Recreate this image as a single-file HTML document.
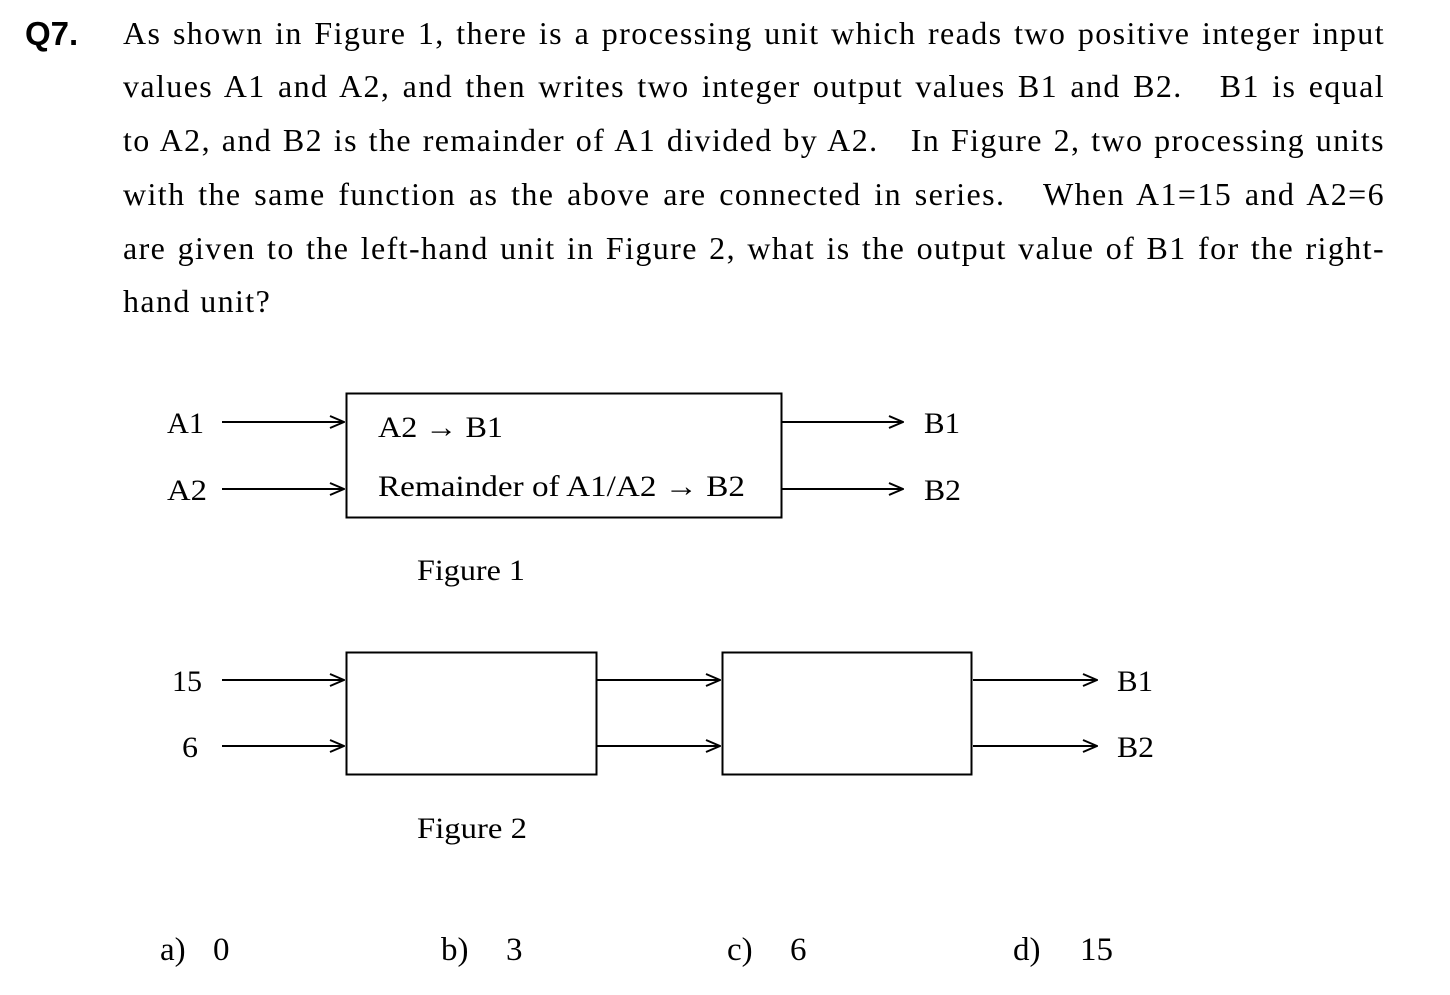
<!DOCTYPE html>
<html><head><meta charset="utf-8"><style>
html,body{margin:0;padding:0;background:#fff;width:1450px;height:995px;overflow:hidden;position:relative}
.q{position:absolute;left:25px;top:15px;font:bold 33px "Liberation Sans",sans-serif;color:#000}
.l{position:absolute;left:123px;width:1262px;font:32px "Liberation Serif",serif;letter-spacing:1.4px;color:#000;text-align:justify;text-align-last:justify;white-space:nowrap;line-height:40px}
.l.last{text-align-last:left}
svg{position:absolute;left:0;top:0}
svg text{font-family:"Liberation Serif",serif;fill:#000}
</style></head><body>
<div class="q">Q7.</div>
<div class="l" style="top:13px">As shown in Figure 1, there is a processing unit which reads two positive integer input</div>
<div class="l" style="top:66px">values A1 and A2, and then writes two integer output values B1 and B2. &nbsp; B1 is equal</div>
<div class="l" style="top:120px">to A2, and B2 is the remainder of A1 divided by A2. &nbsp; In Figure 2, two processing units</div>
<div class="l" style="top:174px">with the same function as the above are connected in series. &nbsp; When A1=15 and A2=6</div>
<div class="l" style="top:228px">are given to the left-hand unit in Figure 2, what is the output value of B1 for the right-</div>
<div class="l last" style="top:281px">hand unit?</div>
<svg width="1450" height="995" viewBox="0 0 1450 995">
<defs><marker id="a" markerWidth="16" markerHeight="14" refX="15" refY="7" orient="auto" markerUnits="userSpaceOnUse"><path d="M1,1 L15,7 L1,13" fill="none" stroke="#000" stroke-width="2"/></marker></defs>
<g stroke="#000" stroke-width="2" fill="none">
<rect x="346.5" y="393.5" width="435" height="124"/>
<line x1="222" y1="422" x2="344" y2="422" marker-end="url(#a)"/>
<line x1="222" y1="489" x2="344" y2="489" marker-end="url(#a)"/>
<line x1="781" y1="422" x2="903" y2="422" marker-end="url(#a)"/>
<line x1="781" y1="489" x2="903" y2="489" marker-end="url(#a)"/>
<rect x="346.5" y="652.5" width="250" height="122"/>
<rect x="722.5" y="652.5" width="249" height="122"/>
<line x1="222" y1="680" x2="344" y2="680" marker-end="url(#a)"/>
<line x1="222" y1="746" x2="344" y2="746" marker-end="url(#a)"/>
<line x1="597" y1="680" x2="720" y2="680" marker-end="url(#a)"/>
<line x1="597" y1="746" x2="720" y2="746" marker-end="url(#a)"/>
<line x1="973" y1="680" x2="1097" y2="680" marker-end="url(#a)"/>
<line x1="973" y1="746" x2="1097" y2="746" marker-end="url(#a)"/>
</g>
<g font-size="30" lengthAdjust="spacingAndGlyphs">
<text x="167" y="433" textLength="37" lengthAdjust="spacingAndGlyphs">A1</text>
<text x="167" y="500" textLength="40" lengthAdjust="spacingAndGlyphs">A2</text>
<text x="378" y="437" textLength="125" lengthAdjust="spacingAndGlyphs">A2 → B1</text>
<text x="378" y="496" textLength="367" lengthAdjust="spacingAndGlyphs">Remainder of A1/A2 → B2</text>
<text x="924" y="433" textLength="36" lengthAdjust="spacingAndGlyphs">B1</text>
<text x="924" y="500" textLength="37" lengthAdjust="spacingAndGlyphs">B2</text>
<text x="417" y="580" textLength="108" lengthAdjust="spacingAndGlyphs">Figure 1</text>
<text x="172" y="691" textLength="30" lengthAdjust="spacingAndGlyphs">15</text>
<text x="182" y="757" textLength="16" lengthAdjust="spacingAndGlyphs">6</text>
<text x="1117" y="691" textLength="36" lengthAdjust="spacingAndGlyphs">B1</text>
<text x="1117" y="757" textLength="37" lengthAdjust="spacingAndGlyphs">B2</text>
<text x="417" y="838" textLength="110" lengthAdjust="spacingAndGlyphs">Figure 2</text>
</g>
<g font-size="33">
<text x="160" y="960">a)</text><text x="213" y="960">0</text>
<text x="441" y="960">b)</text><text x="506" y="960">3</text>
<text x="727" y="960">c)</text><text x="790" y="960">6</text>
<text x="1013" y="960">d)</text><text x="1080" y="960">15</text>
</g>
</svg>
</body></html>
